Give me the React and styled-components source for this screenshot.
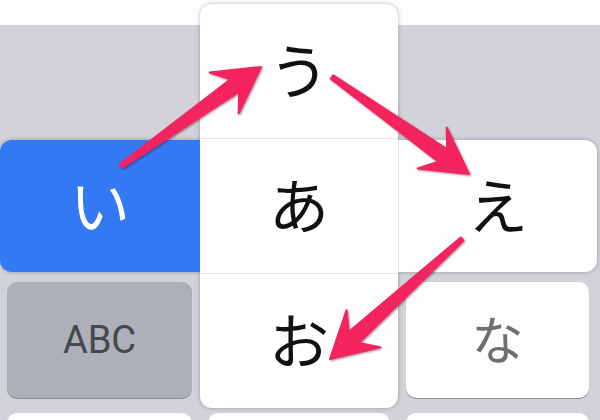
import React from 'react';
import styled, { createGlobalStyle } from 'styled-components';

const Global = createGlobalStyle`
  html, body { margin: 0; padding: 0; background: #fdfdfd; }
  body { font-family: "Noto Sans CJK JP", "Noto Sans", sans-serif; }
`;

const Stage = styled.div`
  position: relative;
  width: 600px;
  height: 420px;
  overflow: hidden;
  background: #fdfdfd;
  display: flex;
  flex-direction: column;
`;

const TopBand = styled.div`
  flex: none;
  height: 25px;
  background: #fdfdfd;
`;

const Keyboard = styled.div`
  flex: 1;
  background: #d1d3d9;
  display: grid;
  grid-template-columns: 185px 182px 183px;
  grid-auto-rows: 116px;
  column-gap: 16px;
  row-gap: 15px;
  padding: 126px 0 0 7px;
  align-content: start;
`;

const Key = styled.div`
  border-radius: 10px;
  background: ${p => (p.$tone === 'dark' ? '#acb0b9' : '#fdfdfd')};
  box-shadow: 0 1px 0 #8a8c92;
  display: flex;
  align-items: center;
  justify-content: center;
  color: ${p => (p.$tone === 'dark' ? '#47484d' : '#6e6e70')};
  font-family: ${p => (p.$latin ? 'Roboto, "Liberation Sans", sans-serif' : '"Noto Sans CJK JP", sans-serif')};
  font-size: ${p => (p.$latin ? '38px' : '52px')};
  padding-bottom: ${p => (p.$latin ? '0' : '6px')};
`;

const Flick = styled.div`
  position: absolute;
  left: 0;
  top: 4px;
  display: grid;
  grid-template-columns: 200px 198px 199px;
  grid-template-rows: 135px 134px 135px;
  filter: drop-shadow(0 0 2px rgba(0, 0, 0, 0.28));
`;

const Cell = styled.div`
  grid-column: ${p => p.$col};
  grid-row: ${p => p.$row};
  background: ${p => (p.$active ? '#3479f4' : '#fefefe')};
  color: ${p => (p.$active ? '#ffffff' : '#111111')};
  display: flex;
  align-items: center;
  justify-content: center;
  font-family: "Noto Sans CJK JP", sans-serif;
  font-size: 60px;
  padding-bottom: 8px;
  box-sizing: border-box;
  border-radius: ${p => p.$radius || '0'};
  ${p => p.$divider === 'bottom' && 'border-bottom: 1px solid #e3e3e6;'}
  ${p => p.$divider === 'top' && 'border-top: 1px solid #e3e3e6;'}
  ${p => p.$divider === 'left' && 'border-left: 1px solid #e3e3e6;'}
  ${p => p.$inset && 'margin-top: 1px; margin-bottom: 1px;'}
`;

const ArrowLayer = styled.svg`
  position: absolute;
  left: 0;
  top: 0;
  width: 600px;
  height: 420px;
  pointer-events: none;
  filter: drop-shadow(1px 1px 1.2px rgba(60, 0, 20, 0.45));
`;

function arrowPoints([tx, ty], [px, py]) {
  const dx = px - tx;
  const dy = py - ty;
  const len = Math.hypot(dx, dy);
  const ux = dx / len;
  const uy = dy / len;
  const nx = -uy;
  const ny = ux;
  const L = 45;
  const W = 25;
  const J = 32;
  const ws = 7.5;
  const wt = 2;
  const pt = (x, y) => `${x.toFixed(1)},${y.toFixed(1)}`;
  return [
    pt(px, py),
    pt(px - ux * L + nx * W, py - uy * L + ny * W),
    pt(px - ux * J + nx * ws, py - uy * J + ny * ws),
    pt(tx + nx * wt, ty + ny * wt),
    pt(tx - nx * wt, ty - ny * wt),
    pt(px - ux * J - nx * ws, py - uy * J - ny * ws),
    pt(px - ux * L - nx * W, py - uy * L - ny * W),
  ].join(' ');
}

const arrows = [
  { from: [121, 166], to: [261, 67] },
  { from: [332, 77], to: [469, 174] },
  { from: [462, 239], to: [330, 359] },
];

export default function App() {
  return (
    <>
      <Global />
      <Stage>
        <TopBand />
        <Keyboard>
          <Key />
          <Key />
          <Key />
          <Key $tone="dark" $latin>ABC</Key>
          <Key />
          <Key>な</Key>
          <Key />
          <Key />
          <Key />
        </Keyboard>
        <Flick>
          <Cell $col={2} $row={1} $radius="12px 12px 0 0" $divider="bottom">う</Cell>
          <Cell $col={1} $row={2} $active $radius="12px 0 0 12px" $inset>い</Cell>
          <Cell $col={2} $row={2}>あ</Cell>
          <Cell $col={3} $row={2} $radius="0 12px 12px 0" $divider="left" $inset>え</Cell>
          <Cell $col={2} $row={3} $radius="0 0 12px 12px" $divider="top">お</Cell>
        </Flick>
        <ArrowLayer viewBox="0 0 600 420">
          {arrows.map((a, i) => (
            <polygon
              key={i}
              points={arrowPoints(a.from, a.to)}
              fill="#f3245f"
              stroke="#f3245f"
              strokeWidth="2"
              strokeLinejoin="round"
            />
          ))}
        </ArrowLayer>
      </Stage>
    </>
  );
}
